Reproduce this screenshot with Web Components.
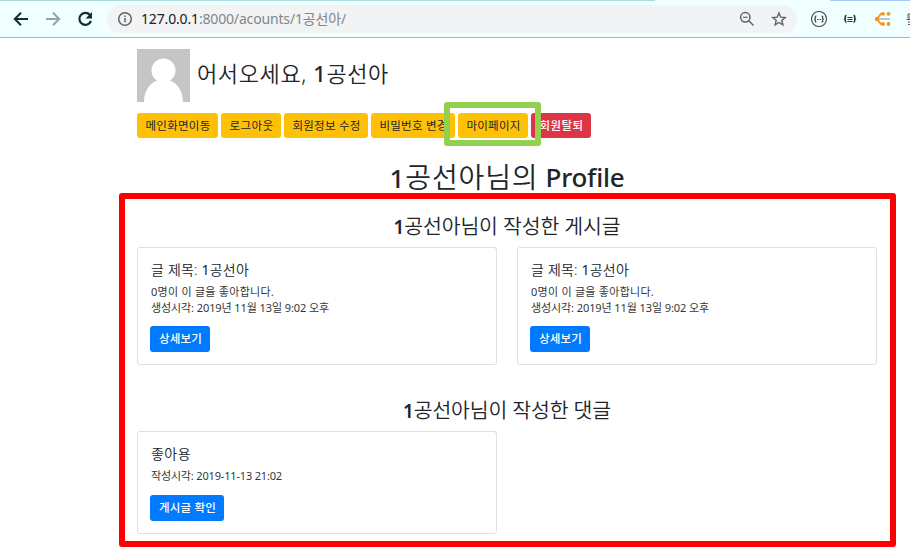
<!DOCTYPE html>
<html lang="ko">
<head>
<meta charset="utf-8">
<title>1공선아님의 Profile</title>
<style>
body{margin:0;width:910px;height:559px;overflow:hidden;background:#fff;color:#212529;font-family:"Noto Sans","Noto Sans CJK KR",sans-serif}
b{font-weight:500}
</style>
</head>
<body>
<browser-bar></browser-bar>
<profile-page></profile-page>
<script>
/* One line of text whose tracking is adjusted to span the given width. */
class FitText extends HTMLElement{
  connectedCallback(){
    const r=this.attachShadow({mode:'open'});
    r.innerHTML=`<style>:host{display:block;white-space:nowrap}span{display:inline-block}</style><span><slot></slot></span>`;
    const w=parseFloat(this.getAttribute('w'));
    this.style.width=w+'px';
    const s=r.querySelector('span'),n=[...this.textContent].length;
    const gap=(w-s.getBoundingClientRect().width)/n;
    s.style.letterSpacing=gap.toFixed(3)+'px';
  }
}
class BrowserBar extends HTMLElement{
  connectedCallback(){
    this.attachShadow({mode:'open'}).innerHTML=`<style>
:host{display:flex;align-items:center;box-sizing:border-box;width:910px;height:38px;background:linear-gradient(90deg,#a9dcdc 655px,#f0ffff 655px,#f0ffff 830px,#a3c7f0 830px) 0 0/910px 1px no-repeat,#f0ffff;border-bottom:1px solid #a8b5b5;overflow:hidden;padding-top:1px}
svg{display:block;flex:none}
.nav{display:flex;width:107px;flex:none;padding-left:11px;box-sizing:border-box;gap:12px}
.omni{display:flex;align-items:center;width:690px;height:28px;border-radius:14px;background:#f1f3f4;box-sizing:border-box;padding:0 10px;flex:none}
.url{font-size:14px;line-height:20px;margin-left:8px;color:#80868b;flex:1}
.url i{font-style:normal;color:#202124}
.ext{display:flex;align-items:center;flex:none;margin-left:13px;gap:14px}
</style>
<div class="nav">
<svg width="20" height="20" viewBox="0 0 20 20" fill="none" stroke="#102c2c" stroke-width="2"><path d="M17 10H4M10 3.800 3.800 10l6.200 6.200"/></svg>
<svg width="20" height="20" viewBox="0 0 20 20" fill="none" stroke="#91a5a5" stroke-width="2"><path d="M3 10h13M10 3.800l6.200 6.200-6.200 6.200"/></svg>
<svg width="20" height="20" viewBox="0 0 20 20"><path d="M14.800 5.700A6 6 0 1 0 16 12" fill="none" stroke="#102c2c" stroke-width="2.200"/><path d="M17 3v6.500h-6.500z" fill="#102c2c"/></svg>
</div>
<div class="omni">
<svg width="16" height="16" viewBox="0 0 16 16" fill="none" stroke="#5f6368" stroke-width="1.500"><circle cx="8" cy="8" r="6.300"/><path d="M8 7v4.300M8 4.400V6"/></svg>
<div class="url"><fit-text w="205"><i>127.0.0.1</i>:8000/acounts/1공선아/</fit-text></div>
<svg width="16" height="16" viewBox="0 0 16 16" fill="none" stroke="#5f6368" stroke-width="1.500"><circle cx="6.300" cy="6.300" r="4.700"/><path d="M9.800 9.800 14.500 14.500"/><path d="M4 6.300h4.600" stroke-width="1.200"/></svg>
<svg style="margin-left:16px" width="16" height="16" viewBox="0 0 16 16" fill="none" stroke="#5f6368" stroke-width="1.400"><path d="M8 2l1.750 4.100 4.450.4-3.400 2.950 1.050 4.350L8 11.500l-3.850 2.300L5.200 9.450 1.800 6.500l4.450-.4z"/></svg>
</div>
<div class="ext">
<svg width="18" height="18" viewBox="0 0 18 18" fill="none" stroke="#444"><circle cx="9" cy="9" r="7.500" stroke-width="1.100"/><path d="M6.500 6Q5 6 5.300 7.500T4.200 9q1.400 0 1.100 1.500T6.500 12M11.500 6Q13 6 12.700 7.500T13.800 9q-1.400 0-1.100 1.500T11.500 12" stroke-width="1.200"/><path d="M7 9.500h4" stroke-dasharray="1 .5"/></svg>
<svg width="16" height="16" viewBox="0 0 16 16" fill="none" stroke="#333"><path d="M4.500 4.500Q3 4.500 3.300 6.500T2 8q1.600 0 1.300 1.500T4.500 11.500M11.500 4.500q1.500 0 1.200 2T14 8q-1.600 0-1.300 1.500T11.500 11.500" stroke-width="1.500"/><path d="M5.500 6.500h5M5.500 8.500h5M5.500 10.500h5" stroke-width="1"/></svg>
<svg style="margin-left:2px" width="18" height="18" viewBox="0 0 18 18" fill="#f7931e"><path d="M9.500 3.800H7L3 9l4 5h2.500" fill="none" stroke="#f7931e" stroke-width="1.800"/><circle cx="3" cy="9" r="2.200"/><circle cx="9" cy="3.800" r="1.900"/><circle cx="14.500" cy="3.800" r="1.900"/><circle cx="9" cy="14" r="1.900"/><circle cx="14.500" cy="14" r="1.900"/><path d="M5 9h11" stroke="#b9b9b0" stroke-width="1.600"/></svg>
<svg style="margin-left:-1px" width="8" height="16" viewBox="0 0 8 16" fill="none" stroke="#555" stroke-width="1"><path d="M8 3H3v4h5M1.500 8.500H8M3 11h5M3 13.500h5M4 5h4"/></svg>
</div>`;
  }
}
class BsButton extends HTMLElement{
  connectedCallback(){
    const k=this.getAttribute('kind')||'warning';
    const c={warning:['#ffc107','#212529'],danger:['#dc3545','#fff'],primary:['#007bff','#fff']}[k];
    this.attachShadow({mode:'open'}).innerHTML=`<style>
:host{display:flex;flex:none;justify-content:center;align-items:center;box-sizing:border-box;border-radius:3px;width:${this.getAttribute('bw')}px;height:${k==='primary'?26:25}px;background:${c[0]};color:${c[1]};font-size:11.500px;line-height:16px;font-weight:${k==='warning'?400:500};padding:${k==='danger'?1:0}px 0 0 1px}
</style><fit-text w="${this.getAttribute('tw')}"></fit-text>`;
    this.shadowRoot.querySelector('fit-text').textContent=this.textContent;
    const f=this.shadowRoot.querySelector('fit-text');
    f.replaceWith(f.cloneNode(true));
  }
}
class PostCard extends HTMLElement{
  connectedCallback(){
    this.attachShadow({mode:'open'}).innerHTML=`<style>
:host{display:flex;flex-direction:column;box-sizing:border-box;border:1px solid #dfdfdf;border-radius:3px;padding:12px;background:#fff}
.t{font-size:14px;line-height:20px;height:20px;padding-left:1px;margin-bottom:4px;font-weight:350}
.m{font-size:11px;line-height:16px;padding-left:1px;margin-bottom:auto;font-weight:400;color:#33373b}
</style><div class="t"><slot name="title"></slot></div><div class="m"><slot></slot></div><slot name="action"></slot>`;
  }
}
/* Coloured frame laid over the page to call out an area. */
class MarkFrame extends HTMLElement{
  connectedCallback(){
    this.attachShadow({mode:'open'}).innerHTML=`<style>:host{display:block;position:absolute;box-sizing:border-box;border:6px solid;border-radius:3px;pointer-events:none}</style>`;
  }
}
class ProfilePage extends HTMLElement{
  connectedCallback(){
    const post=`<post-card><fit-text slot="title" w="98">글 제목: <b>1</b>공선아</fit-text><fit-text w="123">0명이 이 글을 좋아합니다.</fit-text><fit-text w="178">생성시각: 2019년 11월 13일 9:02 오후</fit-text><bs-button slot="action" kind="primary" bw="60" tw="43">상세보기</bs-button></post-card>`;
    this.attachShadow({mode:'open'}).innerHTML=`<style>
:host{display:block;padding:11px 33px 0 137px}
b{font-weight:500}
header{display:flex;gap:7px;height:53px}
header svg{display:block}
.hi{font-size:22px;line-height:49px;font-weight:350}
nav{display:flex;gap:3px;margin-top:11px}
h1,h2{margin:0;font-weight:350;display:flex;justify-content:center}
h1{font-size:28px;line-height:36px;height:37px;margin-top:21px;gap:7px}
h1 .en{font-size:26px;font-weight:500}
h1 b,h2 b,.hi b{font-weight:500;line-height:1}
h1 b{font-size:26px}
h2{font-size:20.500px;line-height:28px;height:28px}
h2 b{font-size:19px;font-weight:600}
post-card b{font-weight:400}
.a{margin-top:16px}.b{margin-top:31px}
.grid{display:grid;grid-template-columns:360px 360px;gap:20px;margin-top:7px}
.grid post-card{height:118px}
.grid .c{height:103px}
.green{left:444px;top:102px;width:97px;height:44px;border-color:#92d050}
.red{left:119px;top:193px;width:777px;height:354px;border-color:#f00}
</style>
<header><svg width="53" height="53" viewBox="0 0 53 53"><path fill="#c5c5c5" d="M0 0h53v53H0z"/><g fill="#fff"><ellipse cx="26.500" cy="21.500" rx="12" ry="12"/><path d="M7 53C7 42 13 34 20 31.500q6.500 3 13 0c7 2.500 13 10.500 13 21.500z"/></g></svg>
<div class="hi"><fit-text w="192">어서오세요, <b>1</b>공선아</fit-text></div></header>
<nav><bs-button bw="81" tw="65">메인화면이동</bs-button><bs-button bw="60" tw="44">로그아웃</bs-button><bs-button bw="84" tw="68">회원정보 수정</bs-button><bs-button bw="84" tw="68">비밀번호 변경</bs-button><bs-button bw="70" tw="54">마이페이지</bs-button><bs-button kind="danger" bw="60" tw="44">회원탈퇴</bs-button></nav>
<h1><fit-text w="149"><b>1</b>공선아님의</fit-text><fit-text class="en" w="79">Profile</fit-text></h1>
<h2 class="a"><fit-text w="227"><b>1</b>공선아님이 작성한 게시글</fit-text></h2>
<div class="grid">${post}${post}</div>
<h2 class="b"><fit-text w="208"><b>1</b>공선아님이 작성한 댓글</fit-text></h2>
<div class="grid"><post-card class="c"><fit-text slot="title" w="40">좋아용</fit-text><fit-text w="131">작성시각: 2019-11-13 21:02</fit-text><bs-button slot="action" kind="primary" bw="74" tw="57">게시글 확인</bs-button></post-card></div>
<mark-frame class="green"></mark-frame><mark-frame class="red"></mark-frame>`;
  }
}
customElements.define('fit-text',FitText);
customElements.define('bs-button',BsButton);
customElements.define('post-card',PostCard);
customElements.define('mark-frame',MarkFrame);
customElements.define('browser-bar',BrowserBar);
customElements.define('profile-page',ProfilePage);
</script>
</body>
</html>
